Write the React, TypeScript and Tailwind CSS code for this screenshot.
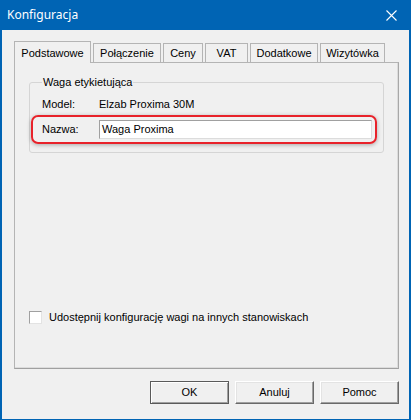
import React from "react";

const tabs = [
  { label: "Podstawowe", w: "w-[77px]", active: true },
  { label: "Połączenie", w: "w-[68px]" },
  { label: "Ceny", w: "w-[40px]" },
  { label: "VAT", w: "w-[43px]" },
  { label: "Dodatkowe", w: "w-[68px]" },
  { label: "Wizytówka", w: "w-[65px]" },
];

function Button({ label, isDefault }: { label: string; isDefault?: boolean }) {
  return (
    <div
      className={
        "w-[79px] h-[23px] flex items-center justify-center bg-[#f0f0f0] text-[11px] text-black " +
        (isDefault
          ? "border border-[#5a5a5a] shadow-[inset_1px_1px_0_#ffffff,inset_-1px_-1px_0_#a0a0a0]"
          : "border border-t-[#ffffff] border-l-[#ffffff] border-b-[#696969] border-r-[#696969] shadow-[inset_-1px_-1px_0_#a0a0a0,inset_1px_1px_0_#e3e3e3]")
      }
    >
      {label}
    </div>
  );
}

export default function App() {
  return (
    <div className="w-[411px] h-[420px] bg-[#0064b4] flex flex-col font-['Liberation_Sans',Arial,sans-serif]">
      {/* TITLE BAR */}
      <div className="h-[30px] flex items-center justify-between pl-[7px] pr-[14px] text-white">
        <span className="text-[12px] font-['Noto_Sans',sans-serif] leading-none">Konfiguracja</span>
        <svg width="11" height="11" viewBox="0 0 11 11" className="mt-[1px]">
          <path d="M0.5 0.5 L10.5 10.5 M10.5 0.5 L0.5 10.5" stroke="#ffffff" strokeWidth="1.1" />
        </svg>
      </div>

      {/* BODY */}
      <div className="mx-[2px] mb-[1px] flex-1 bg-[#f0f0f0] flex flex-col pt-[11px] pl-[12px] pr-[10px] text-[11px] text-black">
        {/* TABS */}
        <div className="flex items-end gap-[2px] h-[21px] relative z-10">
          {tabs.map((t) => (
            <div
              key={t.label}
              className={
                t.w +
                " flex items-center justify-center bg-[#f0f0f0] border border-[#b4b4b4] border-b-0 " +
                (t.active ? "h-[22px] -mb-[1px] pt-[1px]" : "h-[19px] pt-[1px]")
              }
            >
              {t.label}
            </div>
          ))}
        </div>

        {/* PANEL */}
        <div className="h-[307px] border border-[#b4b4b4] border-b-[#a0a0a0] border-r-[#a8a8a8] shadow-[inset_-1px_-1px_0_#dcdcdc] flex flex-col">
          {/* GROUP BOX */}
          <div className="relative mt-[19px] ml-[14px] mr-[14px] h-[71px] border border-[#d5d5d5] rounded-[3px] flex flex-col">
            <span className="absolute left-[12px] -top-[7px] px-[1px] bg-[#f0f0f0] leading-[13px]">
              Waga etykietująca
            </span>
            <div className="flex pt-[15px] pl-[12px] leading-[13px]">
              <span className="w-[57px]">Model:</span>
              <span>Elzab Proxima 30M</span>
            </div>
            <div className="mt-[4px] ml-[1px] mr-[6px] h-[29px] border-2 border-[#e8222a] rounded-[7px] shadow-[0_1px_4px_rgba(0,0,0,0.3)] flex items-center pl-[9px] pr-[3px]">
              <span className="w-[57px]">Nazwa:</span>
              <div className="flex-1 h-[19px] bg-white border border-[#a0a0a0] border-b-[#dcdcdc] border-r-[#dcdcdc] flex items-center pl-[2px]">
                Waga Proxima
              </div>
            </div>
          </div>

          {/* CHECKBOX */}
          <div className="mt-[156px] ml-[14px] flex items-center gap-[7px]">
            <div className="w-[13px] h-[13px] bg-white border border-[#a0a0a0] border-b-[#e3e3e3] border-r-[#e3e3e3]" />
            <span>Udostępnij konfigurację wagi na innych stanowiskach</span>
          </div>
        </div>

        {/* BUTTONS */}
        <div className="mt-[12px] flex justify-end gap-[6px]">
          <Button label="OK" isDefault />
          <Button label="Anuluj" />
          <Button label="Pomoc" />
        </div>
      </div>
    </div>
  );
}
